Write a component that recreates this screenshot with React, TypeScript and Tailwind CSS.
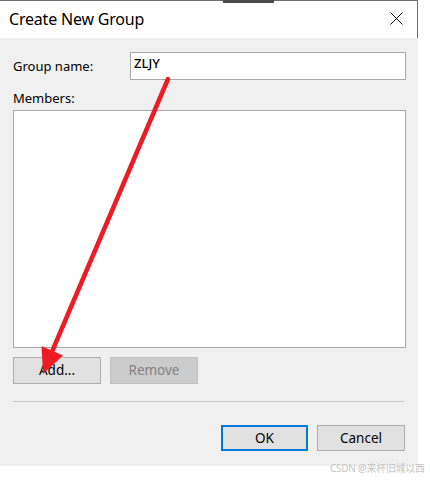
import React from 'react';

const ui = { fontFamily: '"Noto Sans", "Segoe UI", Arial, sans-serif' };

function Btn({ label, disabled, primary, w }: { label: string; disabled?: boolean; primary?: boolean; w: string }) {
  const cls = disabled
    ? 'bg-[#cccccc] border-[#bfbfbf] text-[#838383]'
    : primary
    ? 'bg-[#e1e1e1] border-[#0078d7] text-black border-2'
    : 'bg-[#e1e1e1] border-[#adadad] text-black';
  return (
    <div className={`${w} flex items-center justify-center border text-[13.5px] ${cls}`}>
      {label}
    </div>
  );
}

export default function App() {
  return (
    <div className="relative w-[430px] h-[480px] bg-white overflow-hidden" style={ui}>
      <div className="w-[418px]">
        {/* title bar */}
        <div className="h-[38px] bg-white border-t border-r border-[#6e6e6e] flex items-center justify-between pl-[9px] pr-[14px]">
          <span className="text-[16px] tracking-[-0.2px] text-black leading-none pb-[1px]">Create New Group</span>
          <svg width="13" height="13" viewBox="0 0 13 13" className="mb-[2px]">
            <path d="M0.5 0.5 L12.5 12.5 M12.5 0.5 L0.5 12.5" stroke="#000" strokeWidth="1" />
          </svg>
        </div>

        {/* body */}
        <div className="h-[428px] bg-[#f0f0f0] pt-[14px] pl-[13px] pr-[12px] flex flex-col text-black">
          <div className="flex h-[28px]">
            <span className="w-[117px] pt-[5px] text-[13px] leading-[19px]">Group name:</span>
            <div className="flex-1 bg-white border border-[#a8a8a8] pl-[3px] pt-[1px] text-[13px] leading-[18px] font-medium">
              ZLJY
            </div>
          </div>

          <span className="mt-[9px] text-[13px] leading-[19px]">Members:</span>
          <div className="mt-[2px] h-[238px] bg-white border border-[#a8a8a8]" />

          <div className="mt-[9px] flex gap-[9px] h-[27px]">
            <Btn label="Add..." w="w-[88px]" />
            <Btn label="Remove" w="w-[88px]" disabled />
          </div>

          <div className="mt-[17px] h-px bg-[#c6c6c6] mr-[2px]" />

          <div className="mt-[23px] flex justify-end gap-[9px] h-[26px] pr-[1px]">
            <Btn label="OK" w="w-[87px]" primary />
            <Btn label="Cancel" w="w-[88px]" />
          </div>
        </div>
      </div>

      {/* cut-off window behind */}
      <div className="absolute top-0 left-[223px] w-[51px] h-[3px] bg-[#4a4a4a]" />

      {/* annotation arrow */}
      <svg className="absolute inset-0 pointer-events-none" width="430" height="480">
        <line x1="168" y1="79" x2="51" y2="354" stroke="#ed1c24" strokeWidth="4.5" strokeLinecap="round" />
        <polygon points="43,374 41.5,346 63,355.5" fill="#ed1c24" />
      </svg>

      {/* watermark */}
      <span
        className="absolute left-[330px] top-[462px] text-[10px] leading-[13px] tracking-[-0.3px] text-[#c4c4c4] whitespace-nowrap"
        style={{ fontFamily: '"Noto Sans", "Noto Sans CJK SC", sans-serif' }}
      >
        CSDN @来杯旧城以西
      </span>
    </div>
  );
}
